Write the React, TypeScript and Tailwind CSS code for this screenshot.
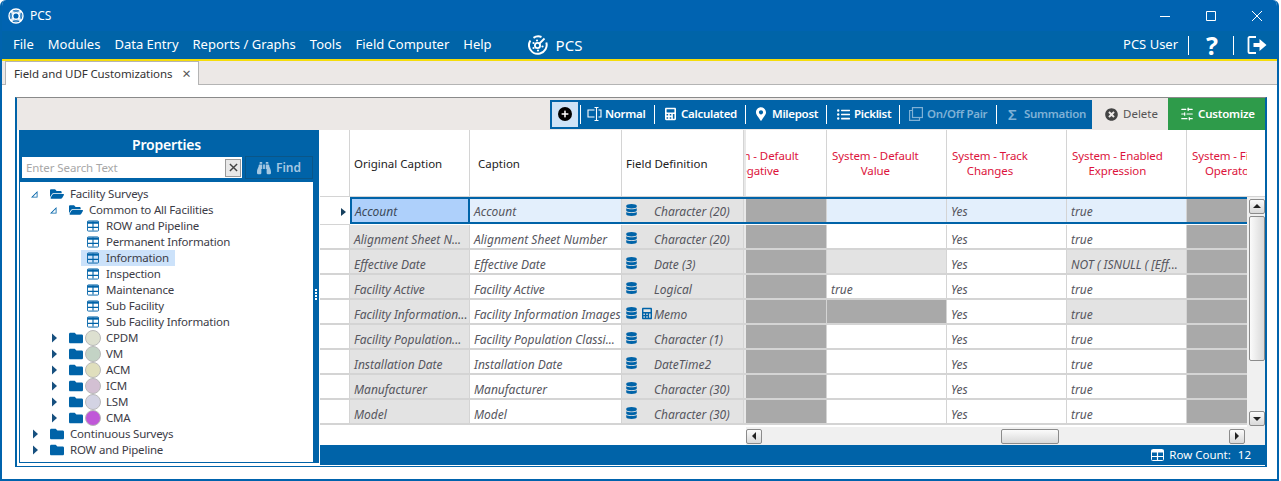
import React from 'react';
import {
  FaBinoculars,
  FaCalculator,
  FaDatabase,
  FaFolder,
  FaFolderOpen,
  FaListUl,
  FaMapMarkerAlt,
  FaPlus,
  FaTimesCircle,
} from 'react-icons/fa';
import { LuSlidersHorizontal } from 'react-icons/lu';

const BLUE = 'bg-[#0063a8]';

const MenuLogo = () => (
  <svg viewBox="0 0 20 20" className="w-5 h-5" fill="none" stroke="white">
    <path d="M5.500 2.800A8.700 8.700 0 0 1 13.500 2" strokeWidth="2" />
    <path d="M18.300 7.500A8.700 8.700 0 0 1 12 18.500A8.700 8.700 0 0 1 2.400 5.500" strokeWidth="2" />
    <circle cx="9.500" cy="10.500" r="2.600" strokeWidth="1.800" />
    <path d="M11 9L16.500 3.500" strokeWidth="1.800" />
    <circle cx="5.500" cy="8" r="1.100" fill="white" stroke="none" />
    <circle cx="9" cy="5.500" r="1.100" fill="white" stroke="none" />
    <circle cx="5.500" cy="13" r="1.100" fill="white" stroke="none" />
    <circle cx="14.500" cy="11.500" r="1.100" fill="white" stroke="none" />
    <circle cx="10" cy="15.500" r="1.100" fill="white" stroke="none" />
  </svg>
);

const TitleLogo = () => (
  <svg viewBox="0 0 16 16" className="w-4 h-4" fill="none" stroke="white">
    <circle cx="8" cy="8" r="7" strokeWidth="1.400" />
    <circle cx="8" cy="8" r="3.300" strokeWidth="1.500" />
    <path d="M3 3l2.500 2.500M13 3l-2.500 2.500M3 13l2.500-2.500M13 13l-2.500-2.500" strokeWidth="2" />
    <circle cx="8" cy="8" r="5.100" stroke="#b8d4ea" strokeWidth="0.800" />
  </svg>
);

const TableIcon = ({ className }: { className: string }) => (
  <svg viewBox="0 0 13 12" className={className}>
    <rect x="0.5" y="0.5" width="12" height="11" rx="1" fill="none" stroke="currentColor" />
    <path d="M0.5 1h12v2.5h-12z" fill="currentColor" />
    <path d="M6.5 1v10M1 7.5h11" stroke="currentColor" strokeWidth="1.2" />
  </svg>
);

const NormalIcon = () => (
  <svg viewBox="0 0 15 14" className="w-[15px] h-[14px] mr-[3px]" fill="none" stroke="white" strokeWidth="1.100">
    <path d="M7.500 3H1v7h6.500" />
    <path d="M11.500 3h2.500v7h-2.500" />
    <path d="M7.500 0.500h4M7.500 13.500h4M9.500 0.500v13" />
  </svg>
);

const PairIcon = () => (
  <svg viewBox="0 0 14 14" className="w-[14px] h-[14px] mr-1" fill="none" stroke="#7fb1d6" strokeWidth="1.200">
    <rect x="3.500" y="0.600" width="9.900" height="9.900" />
    <path d="M3.500 3.500H0.600v9.900h9.900v-2.900" />
  </svg>
);

const ExitIcon = () => (
  <svg viewBox="0 0 20 20" className="w-5 h-5" fill="none">
    <path d="M9 2H2.500a1 1 0 0 0-1 1v14a1 1 0 0 0 1 1H9" stroke="white" strokeWidth="1.800" />
    <path d="M6.500 8h6V4l7 6-7 6v-4h-6z" fill="white" />
  </svg>
);

const Divider = ({ className }: { className: string }) => <div className={`w-px h-[19px] bg-white ${className}`} />;

const menus = ['File', 'Modules', 'Data Entry', 'Reports / Graphs', 'Tools', 'Field Computer', 'Help'];

const Folder = ({ open }: { open?: boolean }) =>
  open ? (
    <FaFolderOpen className="w-[14px] h-[14px] text-[#0063a8]" />
  ) : (
    <FaFolder className="w-[14px] h-[14px] text-[#0063a8]" />
  );

const Arrow = ({ open }: { open?: boolean }) => (
  <svg viewBox="0 0 20 16" className="w-5 h-4">
    {open ? (
      <path d="M1 11.500h6.500V5z M3 10.700h3.700V7z" fill="#0063a8" fillRule="evenodd" />
    ) : (
      <path d="M3 3.500l5 4.500-5 4.500z" fill="#17507f" />
    )}
  </svg>
);

const Leaf = ({ label, active }: { label: string; active?: boolean }) => (
  <div className="h-4 flex pl-[61px]">
    <div className={`flex items-center pl-[6px] pr-[6px] gap-[7px] ${active ? 'bg-[#cce2fa]' : ''}`}>
      <TableIcon className="w-3 h-3 text-[#0063a8]" />
      <span>{label}</span>
    </div>
  </div>
);

const Module = ({ label, color }: { label: string; color: string }) => (
  <div className="h-4 flex items-center pl-[29px]">
    <Arrow />
    <Folder />
    <span className={`w-4 h-4 ml-[2px] mr-[5px] rounded-full border border-[#b9b9b9] ${color}`} />
    <span>{label}</span>
  </div>
);

const Root = ({ label, open }: { label: string; open?: boolean }) => (
  <div className="h-4 flex items-center pl-[10px]">
    <Arrow open={open} />
    <Folder open={open} />
    <span className="ml-[6px]">{label}</span>
  </div>
);

const PropertiesPanel = () => (
  <div className={`ml-[2px] w-[300px] h-[333px] flex flex-col ${BLUE} relative`}>
    <div className="h-[27px] flex items-center justify-center text-white text-[14px] font-semibold tracking-[-0.2px] pt-[2px] pr-[5px]">
      Properties
    </div>
    <div className="h-[25px] flex pl-[3px]">
      <div className="w-[220px] h-[21px] bg-white flex items-center justify-between pl-1 pr-[1px]">
        <span className="text-[11.5px] tracking-[-0.1px] text-[#a8a8a8]">Enter Search Text</span>
        <span className="w-4 h-[18px] border border-[#9a9a9a] bg-[#e8e8e8] flex items-center justify-center text-[#444]">
          <svg viewBox="0 0 10 10" className="w-[9px] h-[9px]" stroke="currentColor" strokeWidth="1.600">
            <path d="M1 1l8 8M9 1l-8 8" />
          </svg>
        </span>
      </div>
      <div className="ml-[3px] w-[68px] h-[23px] -mt-[1px] border border-[#0a5688] flex items-center justify-center gap-[5px] text-[#a5c8e2] text-[12px] font-semibold">
        <FaBinoculars className="w-[14px] h-[14px]" />
        Find
      </div>
    </div>
    <div className="ml-px mr-[6px] mb-px flex-1 bg-white pt-1 text-[11.5px] tracking-[-0.2px] text-[#3c3c46]">
      <Root label="Facility Surveys" open />
      <div className="h-4 flex items-center pl-[29px]">
        <Arrow open />
        <Folder open />
        <span className="ml-[6px]">Common to All Facilities</span>
      </div>
      <Leaf label="ROW and Pipeline" />
      <Leaf label="Permanent Information" />
      <Leaf label="Information" active />
      <Leaf label="Inspection" />
      <Leaf label="Maintenance" />
      <Leaf label="Sub Facility" />
      <Leaf label="Sub Facility Information" />
      <Module label="CPDM" color="bg-[#dde0d0]" />
      <Module label="VM" color="bg-[#c3d3c5]" />
      <Module label="ACM" color="bg-[#e0dfbd]" />
      <Module label="ICM" color="bg-[#d3c0d3]" />
      <Module label="LSM" color="bg-[#d3d3e3]" />
      <Module label="CMA" color="bg-[#c058d8]" />
      <Root label="Continuous Surveys" />
      <Root label="ROW and Pipeline" />
    </div>
    {/* splitter grip */}
    <div className="absolute right-[2px] top-[159px] flex flex-col gap-px">
      <i className="w-[2px] h-[2px] bg-white" />
      <i className="w-[2px] h-[2px] bg-white" />
      <i className="w-[2px] h-[2px] bg-white" />
      <i className="w-[2px] h-[2px] bg-white" />
    </div>
  </div>
);

type Kind = 'w' | 'g' | 'd';

type Row = {
  orig: string;
  cap: string;
  def: string;
  calc?: boolean;
  val: [Kind, string];
  expr: [Kind, string];
};

const rows: Row[] = [
  { orig: 'Alignment Sheet N...', cap: 'Alignment Sheet Number', def: 'Character (20)', val: ['w', ''], expr: ['w', 'true'] },
  { orig: 'Effective Date', cap: 'Effective Date', def: 'Date (3)', val: ['g', ''], expr: ['g', 'NOT ( ISNULL ( [Eff...'] },
  { orig: 'Facility Active', cap: 'Facility Active', def: 'Logical', val: ['w', 'true'], expr: ['w', 'true'] },
  { orig: 'Facility Information...', cap: 'Facility Information Images', def: 'Memo', calc: true, val: ['d', ''], expr: ['g', 'true'] },
  { orig: 'Facility Population...', cap: 'Facility Population Classi...', def: 'Character (1)', val: ['w', ''], expr: ['w', 'true'] },
  { orig: 'Installation Date', cap: 'Installation Date', def: 'DateTime2', val: ['w', ''], expr: ['w', 'true'] },
  { orig: 'Manufacturer', cap: 'Manufacturer', def: 'Character (30)', val: ['w', ''], expr: ['w', 'true'] },
  { orig: 'Model', cap: 'Model', def: 'Character (30)', val: ['w', ''], expr: ['w', 'true'] },
];

const kindClass: Record<Kind, string> = { w: 'bg-white', g: 'bg-[#e3e3e3]', d: 'bg-[#a9a9a9]' };

const Cell = ({ className, children }: { className: string; children?: React.ReactNode }) => (
  <div className={`h-full shrink-0 flex items-center pl-1 whitespace-nowrap overflow-hidden border-r border-[#d4d4d4] ${className}`}>
    {children}
  </div>
);

const DefCell = ({ def, calc, pad }: { def: string; calc?: boolean; pad: string }) => (
  <Cell className={`w-[122px] bg-[#e3e3e3] ${pad}`}>
    <FaDatabase className="w-[11px] h-3 text-[#0063a8] mb-1" />
    <span className="w-[19px] pl-[5px] shrink-0">
      {calc && <FaCalculator className="w-[10px] h-[13px] text-[#0063a8] mb-[2px]" />}
    </span>
    <span className="-ml-[2px]">{def}</span>
  </Cell>
);

const Header = ({ className, children, shift }: { className: string; children: React.ReactNode; shift?: string }) => (
  <div className={`h-full shrink-0 overflow-hidden flex items-center border-r border-[#d4d4d4] pl-[5px] ${className}`}>
    <div className={`shrink-0 whitespace-nowrap text-center leading-[15px] text-[#dc143c] tracking-[-0.1px] ${shift ?? ''}`}>{children}</div>
  </div>
);

const GridTable = () => (
  <div className="flex-1 min-w-0 flex flex-col">
    <div className="h-[67px] flex border-b border-[#d4d4d4] text-[11.5px] text-[#222]">
      <div className="w-[30px] shrink-0 border-r border-[#d4d4d4]" />
      <div className="w-[120px] shrink-0 flex items-center pl-1 pt-[2px] border-r border-[#d4d4d4]">Original Caption</div>
      <div className="w-[152px] shrink-0 flex items-center pl-2 pt-[2px] border-r border-[#d4d4d4]">Caption</div>
      <div className="w-[122px] shrink-0 flex items-center pl-1 pt-[2px] border-r border-[#d4d4d4]">Field Definition</div>
      <div className="w-[2px] shrink-0 bg-[#e8e8e8]" />
      <Header className="w-[81px]" shift="-ml-[39px]">
        System - Default
        <br />
        Negative
      </Header>
      <Header className="w-[120px]">
        System - Default
        <br />
        Value
      </Header>
      <Header className="w-[120px]">
        System - Track
        <br />
        Changes
      </Header>
      <Header className="w-[120px]">
        System - Enabled
        <br />
        Expression
      </Header>
      <Header className="w-[60px] border-r-0">
        System - Filter
        <br />
        Operator
      </Header>
    </div>

    <div className="flex-1 min-h-0 flex flex-col text-[12px] italic text-[#56565e] overflow-hidden">
      <div className="h-[28px] shrink-0 flex">
        <div className="w-[30px] shrink-0 flex items-center justify-end pr-1 pt-[2px] border-b border-[#d4d4d4]">
          <svg viewBox="0 0 5 8" className="w-[5px] h-2">
            <path d="M0 0l5 4-5 4z" fill="#17405f" />
          </svg>
        </div>
        <div className="flex-1 min-w-0 flex border-y-2 border-[#0063a8] mb-px">
          <div className="w-[120px] h-full shrink-0 flex items-center pl-[3px] pt-[3px] border-x-2 border-[#0063a8] bg-[#aed0fb] text-[#3c4a5a]">
            Account
          </div>
          <Cell className="w-[152px] bg-[#e3effc] pt-[3px]">Account</Cell>
          <DefCell def="Character (20)" pad="pt-[3px]" />
          <div className="w-[2px] shrink-0 bg-[#e8e8e8]" />
          <Cell className="w-[81px] bg-[#a9a9a9]" />
          <Cell className="w-[120px] bg-[#e3effc]" />
          <Cell className="w-[120px] bg-[#e3effc] pt-[3px]">Yes</Cell>
          <Cell className="w-[120px] bg-[#e3effc] pt-[3px]">true</Cell>
          <Cell className="w-[60px] bg-[#a9a9a9] border-r-0" />
        </div>
      </div>
      {rows.map((r) => (
        <div key={r.orig} className="h-[25px] shrink-0 flex border-b-2 border-[#d4d4d4]">
          <div className="w-[30px] shrink-0 border-r border-[#d4d4d4]" />
          <Cell className="w-[120px] bg-[#e3e3e3] pt-[6px]">{r.orig}</Cell>
          <Cell className="w-[152px] bg-white pt-[6px]">{r.cap}</Cell>
          <DefCell def={r.def} calc={r.calc} pad="pt-[6px]" />
          <div className="w-[2px] shrink-0 bg-[#e8e8e8]" />
          <Cell className="w-[81px] bg-[#a9a9a9]" />
          <Cell className={`w-[120px] pt-[6px] ${kindClass[r.val[0]]}`}>{r.val[1]}</Cell>
          <Cell className="w-[120px] bg-white pt-[6px]">Yes</Cell>
          <Cell className={`w-[120px] pt-[6px] ${kindClass[r.expr[0]]}`}>{r.expr[1]}</Cell>
          <Cell className="w-[60px] bg-[#a9a9a9] border-r-0" />
        </div>
      ))}
    </div>

    <div className="h-[18px] shrink-0 flex">
      <div className="w-[426px] shrink-0 bg-white" />
      <div className="flex-1 bg-[#f0f0f0] flex items-center">
        <ScrollButton dir="left" />
        <div className="ml-[239px] w-[58px] h-[15px] rounded-[2px] border border-[#8b8b8b] bg-gradient-to-b from-[#fbfbfb] to-[#d9d9d9]" />
        <div className="ml-[170px]">
          <ScrollButton dir="right" />
        </div>
      </div>
    </div>
  </div>
);

const arrowPaths = {
  up: 'M1 6l4-4 4 4z',
  down: 'M1 3l4 4 4-4z',
  left: 'M7 1L3 5l4 4z',
  right: 'M3 1l4 4-4 4z',
};

const ScrollButton = ({ dir }: { dir: 'up' | 'down' | 'left' | 'right' }) => (
  <div className="w-[16px] h-[15px] rounded-[2px] border border-[#8b8b8b] bg-gradient-to-b from-[#fbfbfb] to-[#d9d9d9] flex items-center justify-center">
    <svg viewBox="0 0 10 10" className="w-[10px] h-[10px]">
      <path d={arrowPaths[dir]} fill="#222" />
    </svg>
  </div>
);

const VScroll = () => (
  <div className="w-[18px] shrink-0 flex flex-col">
    <div className="h-[67px] bg-white border-b border-[#d4d4d4]" />
    <div className="flex-1 bg-[#f0f0f0] flex flex-col items-center pt-[2px] pl-px">
      <ScrollButton dir="up" />
      <div className="mt-[2px] w-[16px] h-[145px] rounded-[2px] border border-[#8b8b8b] bg-gradient-to-r from-[#fbfbfb] to-[#d9d9d9]" />
      <div className="mt-[50px]">
        <ScrollButton dir="down" />
      </div>
    </div>
  </div>
);

const Toolbar = () => (
  <div className="h-[32px] bg-[#ece8e6] flex justify-end items-center shrink-0">
    <div className={`h-[29px] w-[542px] shrink-0 flex items-center ${BLUE} text-white text-[11.5px] font-semibold tracking-[-0.3px]`}>
      <div className="ml-[2px] w-[26px] h-[25px] bg-[#cfe3f6] flex items-center justify-center">
        <span className="w-[14px] h-[14px] rounded-full bg-black flex items-center justify-center">
          <FaPlus className="w-2 h-2 text-white" />
        </span>
      </div>
      <Divider className="ml-[2px] mr-[6px]" />
      <NormalIcon />
      <span className="w-[40px]">Normal</span>
      <Divider className="ml-[9px] mr-[10px]" />
      <FaCalculator className="w-[11px] h-[14px] mr-[5px]" />
      <span className="w-[55px]">Calculated</span>
      <Divider className="ml-[9px] mr-[10px]" />
      <FaMapMarkerAlt className="w-[10px] h-[14px] mr-[6px]" />
      <span className="w-[46px]">Milepost</span>
      <Divider className="ml-[8px] mr-[10px]" />
      <FaListUl className="w-[13px] h-[13px] mr-1" />
      <span className="w-[38px]">Picklist</span>
      <Divider className="ml-[7px] mr-[9px]" />
      <PairIcon />
      <span className="w-[61px] text-[#7fb1d6]">On/Off Pair</span>
      <Divider className="ml-[8px] mr-[11px]" />
      <span className="text-[#7fb1d6] text-[15px] w-[16px] leading-none">Σ</span>
      <span className="text-[#7fb1d6]">Summation</span>
    </div>
    <div className="w-[76px] h-[32px] flex items-center pl-[13px] gap-[5px] text-[11.5px] text-[#555]">
      <FaTimesCircle className="w-[13px] h-[13px] text-[#444]" />
      Delete
    </div>
    <div className="w-[97px] h-[32px] bg-[#2e9b4a] flex items-center pl-3 gap-1 text-white text-[11.5px] font-semibold tracking-[-0.2px]">
      <LuSlidersHorizontal className="w-[14px] h-[14px]" />
      Customize
    </div>
  </div>
);

export default function App() {
  return (
    <div className="w-[1281px] h-[481px] bg-white overflow-hidden font-['Noto_Sans',sans-serif]">
      <div className="w-[1279px] h-[481px] rounded-t-[6px] border-x-2 border-b-2 border-[#0063ad] flex flex-col overflow-hidden">
        <div className="h-[31px] -mx-[2px] shrink-0 bg-[#0063b1] flex items-center pl-[8px] text-white text-[12px]">
          <TitleLogo />
          <span className="ml-[6px] flex-1">PCS</span>
          <svg viewBox="0 0 110 12" className="w-[110px] h-3 mr-[9px]" stroke="white" fill="none">
            <path d="M0 6.500h10M46.500 1.500h9v9h-9zM92 1l10 10M102 1l-10 10" />
          </svg>
        </div>
        <div className="h-[28px] -mx-[2px] shrink-0 bg-[#0064a8] flex items-center pl-[13px] pr-[12px] text-white text-[13px]">
          <div className="flex gap-[14px]">
            {menus.map((m) => (
              <span key={m}>{m}</span>
            ))}
          </div>
          <div className="ml-[36px]">
            <MenuLogo />
          </div>
          <span className="ml-[8px] text-[15px] flex-1">PCS</span>
          <span>PCS User</span>
          <Divider className="ml-[10px] mr-[17px]" />
          <span className="text-[25px] font-bold leading-none">?</span>
          <Divider className="ml-[15px] mr-[13px]" />
          <ExitIcon />
        </div>
        <div className="h-[2px] shrink-0 bg-[#f5dc0a]" />
        <div className="h-[24px] shrink-0 bg-[#ece8e6] border-b border-[#b4b4b4] flex">
          <div className="ml-[3px] w-[194px] h-[24px] bg-white border border-b-0 border-[#b4b4b4] flex items-center pl-[8px] text-[11.5px] tracking-[-0.1px] text-[#333]">
            <span>Field and UDF Customizations</span>
            <span className="ml-[10px] text-[#555] text-[15px] leading-none">×</span>
          </div>
        </div>
        <div className="flex-1 bg-white pt-[12px] pl-[13px] pr-[10px] pb-[12px] min-h-0">
          <div className="h-full flex flex-col border-x-2 border-b border-l-[#0063a8] border-r-[#0063a8] border-b-[#0063a8] border-t border-t-[#8a8a8a]">
            <Toolbar />
            <div className="flex-1 min-h-0 flex">
              <PropertiesPanel />
              <div className="ml-px flex-1 min-w-0 flex flex-col">
                <div className="flex-1 min-h-0 flex">
                  <GridTable />
                  <VScroll />
                </div>
                <div className={`h-5 shrink-0 mb-px ${BLUE} flex items-center justify-end pr-[14px] text-white text-[11.5px]`}>
                  <TableIcon className="w-[13px] h-3 mr-[5px]" />
                  <span>Row Count:</span>
                  <span className="ml-[7px]">12</span>
                </div>
              </div>
            </div>
          </div>
        </div>
      </div>
    </div>
  );
}
